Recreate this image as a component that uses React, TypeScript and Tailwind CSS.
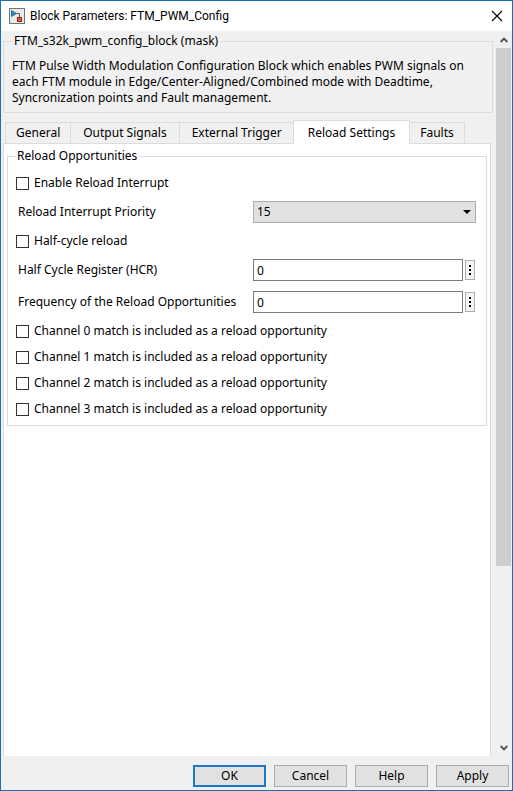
import React, { useState } from 'react';

const tabs = ['General', 'Output Signals', 'External Trigger', 'Reload Settings', 'Faults'];

function Check({ label }: { label: string }) {
  return (
    <label className="flex h-[22px] items-center gap-[5px]">
      <input
        type="checkbox"
        className="h-[13px] w-[13px] shrink-0 appearance-none border border-[#333] bg-white checked:bg-[#333]"
      />
      <span>{label}</span>
    </label>
  );
}

function EditRow({ id, label }: { id: string; label: string }) {
  const [value, setValue] = useState('0');
  return (
    <div className="flex h-[22px] items-center pl-[2px] pr-[1px]">
      <label htmlFor={id} className="w-[235px] shrink-0 whitespace-nowrap">
        {label}
      </label>
      <input
        id={id}
        type="text"
        value={value}
        onChange={(e) => setValue(e.target.value)}
        className="h-[22px] min-w-0 flex-1 border border-[#7a7a7a] bg-white px-[3px] outline-none"
      />
      <button
        type="button"
        aria-label={`More options for ${label}`}
        className="ml-[2px] flex h-5 w-[10px] shrink-0 flex-col items-center justify-center gap-[2px] border border-[#adadad] bg-[#f4f4f4]"
      >
        <span className="h-[2px] w-[2px] bg-black" />
        <span className="h-[2px] w-[2px] bg-black" />
        <span className="h-[2px] w-[2px] bg-black" />
      </button>
    </div>
  );
}

export default function App() {
  const [active, setActive] = useState('Reload Settings');
  return (
    <div className="flex h-screen flex-col border border-[#1a6fb5] bg-[#f0f0f0] font-['Noto_Sans',sans-serif] text-[12px] leading-4 text-black">
      <header className="flex h-[30px] shrink-0 items-center bg-white pl-2 pr-[9px] font-['Roboto','Noto_Sans',sans-serif]">
        <svg width="16" height="16" viewBox="0 0 16 16" aria-hidden="true">
          <rect x="0.5" y="0.5" width="15" height="15" fill="#e9e9e6" stroke="#6f7478" />
          <path d="M7.5 5.5h3V9" fill="none" stroke="#555" />
          <path d="M2.5 2.5l5 3L2.5 8.5z" fill="#2f86c4" stroke="#1d5f94" strokeWidth="0.8" />
          <rect x="8.5" y="9.5" width="4" height="4" fill="#e0603c" stroke="#8c2a1b" />
        </svg>
        <h1 className="ml-[5px] flex-1">Block Parameters: FTM_PWM_Config</h1>
        <button type="button" aria-label="Close">
          <svg width="12" height="12" viewBox="0 0 12 12" stroke="#000" strokeWidth="1.1">
            <path d="M1 1l10 10M11 1L1 11" />
          </svg>
        </button>
      </header>

      <div className="flex min-h-0 flex-1">
        <main className="flex min-w-0 flex-1 flex-col pl-[2px] pr-[3px] pt-[2px]">
          <fieldset className="border border-[#dcdcdc] pb-[6px] pl-2 pr-4">
            <legend className="px-[2px]">FTM_s32k_pwm_config_block (mask)</legend>
            <p className="pt-[9px]">
              FTM Pulse Width Modulation Configuration Block which enables PWM signals on each FTM
              module in Edge/Center-Aligned/Combined mode with Deadtime, Syncronization points and
              Fault management.
            </p>
          </fieldset>

          <div role="tablist" className="mt-[7px] flex shrink-0 items-end pl-[2px]">
            {tabs.map((t) => (
              <button
                key={t}
                type="button"
                role="tab"
                aria-selected={t === active}
                onClick={() => setActive(t)}
                className={
                  t === active
                    ? 'relative -mx-px -mb-px h-6 whitespace-nowrap border border-b-0 border-[#dcdcdc] bg-white px-[14px]'
                    : 'h-[21px] whitespace-nowrap border border-b-0 border-r-0 border-[#dcdcdc] px-3 first:px-[10px] last:border-r last:px-[10px]'
                }
              >
                {t}
              </button>
            ))}
          </div>

          <section className="mr-[2px] flex-1 border border-b-0 border-[#dcdcdc] bg-white px-[3px] pt-1">
            <fieldset className="border border-[#dcdcdc] pb-[5px] pl-2 pr-[10px]">
              <legend className="ml-[-1px] px-[2px]">Reload Opportunities</legend>
              <div className="flex flex-col gap-[7px] pt-[8px]">
                <Check label="Enable Reload Interrupt" />
                <div className="flex h-[22px] items-center pl-[2px]">
                  <label htmlFor="priority" className="w-[235px] shrink-0">
                    Reload Interrupt Priority
                  </label>
                  <div className="relative h-[22px] min-w-0 flex-1">
                    <select
                      id="priority"
                      defaultValue="15"
                      className="h-full w-full appearance-none border border-[#adadad] bg-[#e1e1e1] px-[3px] outline-none"
                    >
                      <option>15</option>
                      <option>14</option>
                      <option>13</option>
                      <option>12</option>
                    </select>
                    <svg
                      className="pointer-events-none absolute right-[5px] top-[9px]"
                      width="8"
                      height="4"
                      viewBox="0 0 8 4"
                      aria-hidden="true"
                    >
                      <path d="M0 0h8L4 4z" />
                    </svg>
                  </div>
                </div>
                <Check label="Half-cycle reload" />
                <EditRow id="hcr" label="Half Cycle Register (HCR)" />
              </div>
              <div className="mt-[10px] flex flex-col gap-[7px]">
                <EditRow id="freq" label="Frequency of the Reload Opportunities" />
                <div className="flex flex-col gap-1">
                  <Check label="Channel 0 match is included as a reload opportunity" />
                  <Check label="Channel 1 match is included as a reload opportunity" />
                  <Check label="Channel 2 match is included as a reload opportunity" />
                  <Check label="Channel 3 match is included as a reload opportunity" />
                </div>
              </div>
            </fieldset>
          </section>
        </main>

        <div className="flex w-4 shrink-0 flex-col items-center pr-px">
          <button type="button" aria-label="Scroll up" className="flex h-[17px] items-center">
            <svg width="8" height="6" viewBox="0 0 8 6" fill="none" stroke="#505050" strokeWidth="1.8">
              <path d="M0.7 5L4 1.6L7.3 5" />
            </svg>
          </button>
          <div className="w-full flex-1">
            <div className="h-3/4 w-full bg-[#cdcdcd]" />
          </div>
          <button type="button" aria-label="Scroll down" className="flex h-[17px] items-center">
            <svg width="8" height="6" viewBox="0 0 8 6" fill="none" stroke="#505050" strokeWidth="1.8">
              <path d="M0.7 1L4 4.4L7.3 1" />
            </svg>
          </button>
        </div>
      </div>

      <footer className="flex shrink-0 justify-end gap-2 pb-[3px] pr-[3px] pt-[9px]">
        <button type="button" className="h-[22px] w-[73px] border-2 border-[#1a78c8] bg-[#e1e1e1]">
          OK
        </button>
        {['Cancel', 'Help', 'Apply'].map((b) => (
          <button key={b} type="button" className="h-[22px] w-[73px] border border-[#adadad] bg-[#e1e1e1]">
            {b}
          </button>
        ))}
      </footer>
    </div>
  );
}
